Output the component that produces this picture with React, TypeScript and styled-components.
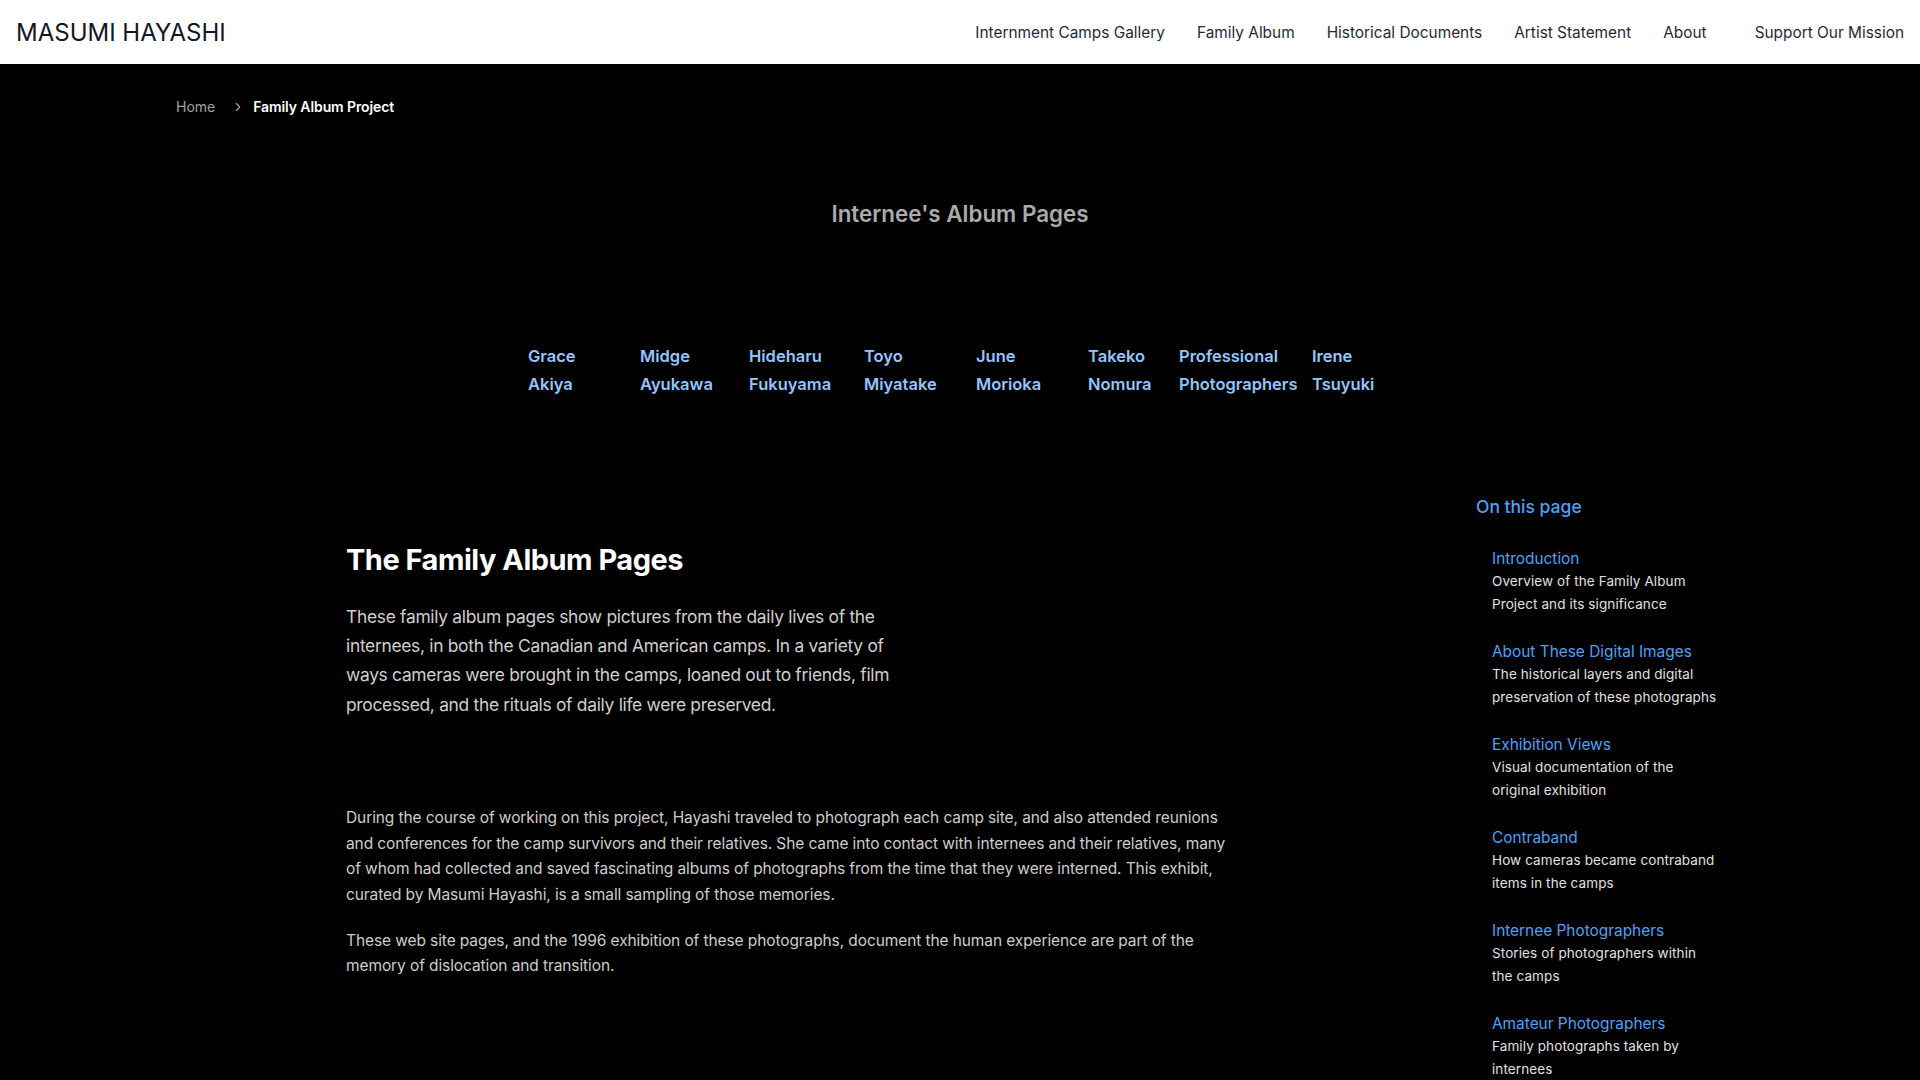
import React from "react";
import styled, { createGlobalStyle } from "styled-components";

const GlobalStyle = createGlobalStyle`
  * { box-sizing: border-box; }
  html, body { margin: 0; padding: 0; background: #000; }
  body { font-family: Inter, "Noto Sans", "Liberation Sans", sans-serif; color: #fff; -webkit-font-smoothing: antialiased; }
  a { text-decoration: none; color: inherit; }
`;

const Header = styled.header`
  height: 64px;
  background: #fff;
  display: flex;
  align-items: center;
  justify-content: space-between;
  padding: 0 16px;
`;

const Logo = styled.a`
  font-size: 24px;
  font-weight: 400;
  color: #111827;
`;

const Nav = styled.nav`
  display: flex;
  align-items: center;
  gap: 32px;
`;

const NavLink = styled.a<{ $cta?: boolean }>`
  font-size: 15.4px;
  color: #1f2937;
  margin-left: ${(p) => (p.$cta ? "16px" : "0")};
`;

const Container = styled.div`
  max-width: 1568px;
  margin: 0 auto;
`;

const Breadcrumb = styled.div`
  display: flex;
  align-items: center;
  padding-top: 33px;
  font-size: 14px;
  line-height: 20px;
`;

const Crumb = styled.a`
  color: #a3a3a3;
`;

const CrumbCurrent = styled.span`
  color: #fff;
  font-weight: 600;
  letter-spacing: -0.1px;
`;

const Chevron = styled.svg`
  width: 14px;
  height: 14px;
  margin: 0 8px 0 16px;
`;

const AlbumTitle = styled.h2`
  margin: 82px 0 0;
  text-align: center;
  font-size: 22.4px;
  line-height: 30px;
  font-weight: 600;
  color: #ababab;
`;

const NameGrid = styled.div`
  display: grid;
  grid-template-columns: 112px 109px 115px 112px 112px 91px 133px 80px;
  justify-content: center;
  margin-top: 113px;
`;

const NameLink = styled.a`
  font-size: 16.5px;
  line-height: 28px;
  font-weight: 600;
  color: #93c5fd;
`;

const ContentRow = styled.div`
  display: flex;
  justify-content: space-between;
  margin-top: 95px;
`;

const Main = styled.main`
  padding-left: 170px;
  padding-top: 49px;
`;

const Heading = styled.h1`
  margin: 0;
  font-size: 29px;
  line-height: 36px;
  font-weight: 700;
  color: #fff;
  letter-spacing: -0.5px;
`;

const Lead = styled.p`
  margin: 24px 0 0;
  max-width: 576px;
  font-size: 17.4px;
  line-height: 29.2px;
  color: #cfcfcf;
  letter-spacing: -0.3px;
`;

const Body = styled.div`
  margin-top: 86px;
  max-width: 890px;
`;

const BodyText = styled.p`
  margin: 0 0 20px;
  font-size: 15.5px;
  line-height: 25.7px;
  color: #cdcdcd;
  letter-spacing: -0.1px;
`;

const Aside = styled.aside`
  width: 268px;
`;

const AsideTitle = styled.h3`
  margin: 0;
  font-size: 17.5px;
  line-height: 28px;
  font-weight: 500;
  color: #4ea1f5;
`;

const TocList = styled.ul`
  list-style: none;
  margin: 27px 0 0;
  padding: 0 0 0 16px;
  display: flex;
  flex-direction: column;
  gap: 25px;
`;

const TocItem = styled.li`
  display: flex;
  flex-direction: column;
`;

const TocLink = styled.a`
  font-size: 15.4px;
  line-height: 22px;
  color: #4ea1f5;
`;

const TocDesc = styled.span`
  max-width: 226px;
  font-size: 13.5px;
  line-height: 23px;
  color: #e0e0e0;
  letter-spacing: 0.1px;
`;

const names: [string, string][] = [
  ["Grace", "Akiya"],
  ["Midge", "Ayukawa"],
  ["Hideharu", "Fukuyama"],
  ["Toyo", "Miyatake"],
  ["June", "Morioka"],
  ["Takeko", "Nomura"],
  ["Professional", "Photographers"],
  ["Irene", "Tsuyuki"],
];

const toc: [string, string][] = [
  ["Introduction", "Overview of the Family Album Project and its significance"],
  ["About These Digital Images", "The historical layers and digital preservation of these photographs"],
  ["Exhibition Views", "Visual documentation of the original exhibition"],
  ["Contraband", "How cameras became contraband items in the camps"],
  ["Internee Photographers", "Stories of photographers within the camps"],
  ["Amateur Photographers", "Family photographs taken by internees"],
];

export default function App() {
  return (
    <>
      <GlobalStyle />
      <Header>
        <Logo href="#">MASUMI HAYASHI</Logo>
        <Nav>
          <NavLink href="#">Internment Camps Gallery</NavLink>
          <NavLink href="#">Family Album</NavLink>
          <NavLink href="#">Historical Documents</NavLink>
          <NavLink href="#">Artist Statement</NavLink>
          <NavLink href="#">About</NavLink>
          <NavLink href="#" $cta>
            Support Our Mission
          </NavLink>
        </Nav>
      </Header>
      <Container>
        <Breadcrumb>
          <Crumb href="#">Home</Crumb>
          <Chevron viewBox="0 0 24 24" fill="none" stroke="#a3a3a3" strokeWidth="2" strokeLinecap="round" strokeLinejoin="round">
            <path d="m9 18 6-6-6-6" />
          </Chevron>
          <CrumbCurrent>Family Album Project</CrumbCurrent>
        </Breadcrumb>
        <AlbumTitle>Internee's Album Pages</AlbumTitle>
        <NameGrid>
          {names.map(([a, b]) => (
            <NameLink href="#" key={a}>
              {a}
              <br />
              {b}
            </NameLink>
          ))}
        </NameGrid>
        <ContentRow>
          <Main>
            <Heading>The Family Album Pages</Heading>
            <Lead>
              These family album pages show pictures from the daily lives of the internees, in both the Canadian and
              American camps. In a variety of ways cameras were brought in the camps, loaned out to friends, film
              processed, and the rituals of daily life were preserved.
            </Lead>
            <Body>
              <BodyText>
                During the course of working on this project, Hayashi traveled to photograph each camp site, and also
                attended reunions and conferences for the camp survivors and their relatives. She came into contact with
                internees and their relatives, many of whom had collected and saved fascinating albums of photographs from
                the time that they were interned. This exhibit, curated by Masumi Hayashi, is a small sampling of those
                memories.
              </BodyText>
              <BodyText>
                These web site pages, and the 1996 exhibition of these photographs, document the human experience are part
                of the memory of dislocation and transition.
              </BodyText>
            </Body>
          </Main>
          <Aside>
            <AsideTitle>On this page</AsideTitle>
            <TocList>
              {toc.map(([t, d]) => (
                <TocItem key={t}>
                  <TocLink href="#">{t}</TocLink>
                  <TocDesc>{d}</TocDesc>
                </TocItem>
              ))}
            </TocList>
          </Aside>
        </ContentRow>
      </Container>
    </>
  );
}
